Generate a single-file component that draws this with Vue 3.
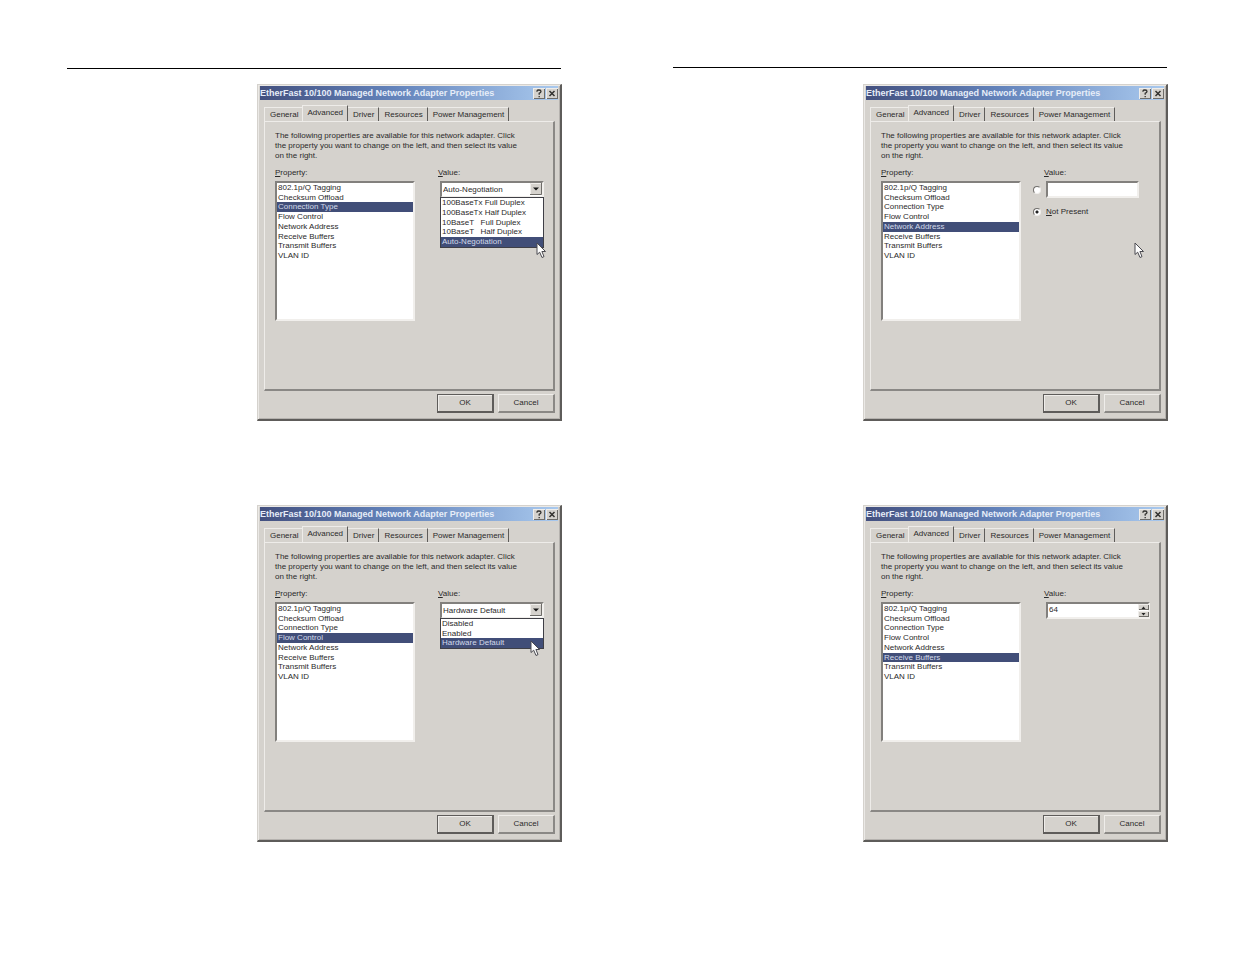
<script setup>
import { ref } from 'vue'

const properties = [
  '802.1p/Q Tagging',
  'Checksum Offload',
  'Connection Type',
  'Flow Control',
  'Network Address',
  'Receive Buffers',
  'Transmit Buffers',
  'VLAN ID',
]

const tabs = ['General', 'Advanced', 'Driver', 'Resources', 'Power Management']

const pages = ref([
  {
    id: 'left',
    dialogs: [
      {
        id: 'connection',
        selected: 'Connection Type',
        kind: 'combo',
        value: 'Auto-Negotiation',
        cursor: 'at-end',
        options: [
          '100BaseTx Full Duplex',
          '100BaseTx Half Duplex',
          '10BaseT   Full Duplex',
          '10BaseT   Half Duplex',
          'Auto-Negotiation',
        ],
      },
      {
        id: 'flow',
        selected: 'Flow Control',
        kind: 'combo',
        value: 'Hardware Default',
        cursor: 'at-option',
        options: ['Disabled', 'Enabled', 'Hardware Default'],
      },
    ],
  },
  {
    id: 'right',
    dialogs: [
      { id: 'address', selected: 'Network Address', kind: 'address', value: '', present: 'no', cursor: 'at-panel' },
      { id: 'buffers', selected: 'Receive Buffers', kind: 'spin', value: '64' },
    ],
  },
])

const popupHeight = (count) => Math.round(count * 9.7) + 2 + 'px'
</script>

<template>
  <main class="spread">
    <section v-for="page in pages" :key="page.id" class="page" :class="page.id">
      <hr class="rule" />
      <article v-for="d in page.dialogs" :key="d.id" class="dialog">
        <header class="titlebar">
          <h2 class="title">EtherFast 10/100 Managed Network Adapter Properties</h2>
          <button class="cap" type="button" aria-label="Help">
            <svg viewBox="0 0 12 11" width="12" height="11"><path d="M4 3.8V2.9Q4.3 2 6 2Q8 2 8 3.5Q8 4.6 6.2 5.3V6.8M6.2 8V9.3" fill="none" stroke="#33322f" stroke-width="1.3" /></svg>
          </button>
          <button class="cap" type="button" aria-label="Close">
            <svg viewBox="0 0 12 11" width="12" height="11"><path d="M3.5 3L8.5 8M8.5 3L3.5 8" fill="none" stroke="#33322f" stroke-width="1.5" /></svg>
          </button>
        </header>

        <nav class="tabs" role="tablist">
          <button
            v-for="t in tabs"
            :key="t"
            class="tab"
            :class="{ active: t === 'Advanced' }"
            type="button"
            role="tab"
            :aria-selected="t === 'Advanced'"
          >{{ t }}</button>
        </nav>

        <div class="panel">
          <p class="intro">
            The following properties are available for this network adapter. Click<br />
            the property you want to change on the left, and then select its value<br />
            on the right.
          </p>
          <div class="fields">
            <div class="property">
              <span :id="d.id + '-label'" class="label"><u>P</u>roperty:</span>
              <ul class="list" role="listbox" :aria-labelledby="d.id + '-label'">
                <li
                  v-for="p in properties"
                  :key="p"
                  class="item"
                  :class="{ selected: p === d.selected }"
                  role="option"
                  :aria-selected="p === d.selected"
                  @click="d.selected = p"
                >{{ p }}</li>
              </ul>
            </div>

            <div class="value">
              <label class="label" :for="d.id + '-value'"><u>V</u>alue:</label>

              <div v-if="d.kind === 'combo'" class="combo">
                <select :id="d.id + '-value'" v-model="d.value" class="field">
                  <option v-for="o in d.options" :key="o">{{ o }}</option>
                </select>
                <svg class="arrow" viewBox="0 0 12 12" width="12" height="12">
                  <rect width="12" height="12" fill="#d5d2cd" />
                  <path d="M0.5 11V0.5H11" fill="none" stroke="#f1efec" />
                  <path d="M0 11.5H11.5V0" fill="none" stroke="#6e6c68" />
                  <path d="M3 4.5H9L6 7.5Z" fill="#161616" />
                </svg>
                <ul class="popup" :style="{ height: popupHeight(d.options.length) }">
                  <li v-for="o in d.options" :key="o" class="item" :class="{ selected: o === d.value }">{{ o }}</li>
                </ul>
              </div>

              <div v-else-if="d.kind === 'address'" class="address">
                <input v-model="d.present" class="radio" type="radio" name="present" value="yes" aria-label="Value" />
                <input :id="d.id + '-value'" v-model="d.value" class="field" type="text" />
                <input id="not-present" v-model="d.present" class="radio" type="radio" name="present" value="no" />
                <label class="absent" for="not-present"><u>N</u>ot Present</label>
              </div>

              <div v-else class="spin">
                <input :id="d.id + '-value'" v-model="d.value" class="field" type="text" />
                <div class="steps">
                  <button class="step" type="button" aria-label="Increase"><svg viewBox="0 0 5 3" width="5" height="3"><path d="M0.5 3L2.5 0.5L4.5 3Z" fill="#222" /></svg></button>
                  <button class="step" type="button" aria-label="Decrease"><svg viewBox="0 0 5 3" width="5" height="3"><path d="M0.5 0L2.5 2.5L4.5 0Z" fill="#222" /></svg></button>
                </div>
              </div>
            </div>
          </div>
        </div>

        <footer class="actions">
          <button class="push default" type="button">OK</button>
          <button class="push" type="button">Cancel</button>
        </footer>

        <svg v-if="d.cursor" class="cursor" :class="d.cursor" viewBox="0 0 11 17" width="11" height="17">
          <path d="M1 1V12.5L3.7 10.2L6 15.5L8 14.6L5.9 9.5H9.5Z" fill="#fff" stroke="#4a4a50" stroke-width="1" />
        </svg>
      </article>
    </section>
  </main>
</template>

<style>
body {
  margin: 0;
  background: #fff;
}
</style>

<style scoped>
.spread {
  display: grid;
  grid-template-columns: 1fr 1fr;
  gap: 111px;
  padding: 67px 67px 112px;
  font-family: "Liberation Sans", Arial, sans-serif;
  font-size: 8px;
  line-height: 10px;
  color: #2b2a2a;
}
.page {
  display: flex;
  flex-direction: column;
}
.rule {
  width: auto;
  height: 1px;
  margin: 0 1px 16px 0;
  border: 0;
  background: #000;
}
.left .rule {
  margin: 1px 1px 15px 0;
}
.dialog {
  position: relative;
  box-sizing: border-box;
  margin: 0 0 84px 190px;
  padding: 1px 2px 6px 2px;
  border: 1px solid #d5d2cd;
  border-right: 2px solid #5e5c5a;
  border-bottom: 2px solid #5e5c5a;
  background: #d5d2cd;
  box-shadow: inset 1px 1px #ebe9e6, inset -1px -1px #b5b2ae;
}
.dialog:last-child {
  margin-bottom: 0;
}
button {
  margin: 0;
  padding: 0;
  border: 0;
  background: #d5d2cd;
  font: inherit;
  color: inherit;
}
svg {
  display: block;
}
.titlebar {
  display: flex;
  align-items: center;
  gap: 1px;
  height: 14px;
  background: linear-gradient(90deg, #43507f, #6383bb 45%, #a9c9ee);
}
.title {
  flex: 1;
  margin: 0;
  font-size: 9px;
  font-weight: 700;
  line-height: 14px;
  white-space: nowrap;
  color: #e6edf8;
}
.cap {
  width: 12px;
  height: 11px;
  box-shadow: inset 1px 1px #efedea, inset -1px -1px #6e6c68;
}
.tabs {
  display: flex;
  align-items: flex-end;
  height: 16px;
  margin: 5px 0 0 4px;
}
.tab {
  height: 14px;
  padding: 0 4px 0 5px;
  border-top: 1px solid #eeece9;
  border-right: 1px solid #5e5c5a;
  white-space: nowrap;
}
.tab:first-child {
  border-right: 0;
  border-left: 1px solid #eeece9;
}
.tab.active {
  height: 16px;
  padding: 0 4px 2px;
  border-left: 1px solid #eeece9;
}
.panel {
  box-sizing: border-box;
  height: 270px;
  margin: 0 3px 0 4px;
  padding: 9px 6px 0 10px;
  border: 1px solid #eeece9;
  border-right: 2px solid #8a8885;
  border-bottom: 2px solid #8a8885;
}
.intro {
  margin: 0;
  white-space: nowrap;
}
.fields {
  display: flex;
  gap: 12px;
  margin-top: 7px;
}
.label {
  display: block;
  height: 13px;
}
.property {
  width: 140px;
}
.value {
  flex: 1;
}
.value .label {
  padding-left: 11px;
}
.list,
.popup {
  display: grid;
  box-sizing: border-box;
  margin: 0;
  padding: 0;
  list-style: none;
  background: #fff;
}
.list {
  grid-template-rows: repeat(14, minmax(0, 1fr));
  height: 140px;
  border: 2px solid #f1efec;
  border-top-color: #82807d;
  border-left-color: #82807d;
}
.item {
  padding-left: 1px;
  line-height: 9px;
  white-space: pre;
}
.item.selected {
  background: #414e78;
  color: #d3daea;
}
.field {
  box-sizing: border-box;
  display: block;
  width: 100%;
  height: 17px;
  margin: 0;
  padding: 0 0 0 1px;
  border: 2px solid #f1efec;
  border-top-color: #82807d;
  border-left-color: #82807d;
  border-radius: 0;
  outline: 0;
  appearance: none;
  background: #fff;
  font: inherit;
  color: inherit;
}
.combo,
.spin {
  position: relative;
  width: 104px;
  margin-left: 13px;
}
.arrow {
  position: absolute;
  top: 2px;
  right: 2px;
}
.popup {
  position: absolute;
  top: 16px;
  left: 0;
  width: 100%;
  grid-auto-rows: minmax(0, 1fr);
  border: 1px solid #3f3f46;
}
.address {
  display: grid;
  grid-template-columns: 13px 93px;
  row-gap: 9px;
  align-items: center;
}
.radio {
  width: 8px;
  height: 8px;
  margin: 0;
  border: 1px solid #f1efec;
  border-top-color: #716f6c;
  border-left-color: #716f6c;
  border-radius: 50%;
  appearance: none;
  background: #fff;
}
.radio:checked {
  background: radial-gradient(circle, #222 0 1px, #fff 2px);
}
.spin .field {
  padding-bottom: 2px;
}
.steps {
  position: absolute;
  top: 2px;
  right: 1px;
  display: grid;
  gap: 1px;
}
.step {
  display: grid;
  place-items: center;
  width: 11px;
  height: 6px;
  box-shadow: inset 1px 1px #efedea, inset -1px -1px #6e6c68;
}
.actions {
  display: flex;
  justify-content: flex-end;
  gap: 4px;
  margin: 3px 3px 0 0;
}
.push {
  width: 57px;
  height: 19px;
  border: 1px solid #efedea;
  border-right: 2px solid #8a8885;
  border-bottom: 2px solid #8a8885;
}
.push.default {
  border-color: #5e5c5a;
  box-shadow: inset 1px 1px #efedea;
}
.cursor {
  position: absolute;
}
.at-end {
  top: 157px;
  left: 278px;
}
.at-option {
  top: 134px;
  left: 272px;
}
.at-panel {
  top: 157px;
  left: 270px;
}
</style>
